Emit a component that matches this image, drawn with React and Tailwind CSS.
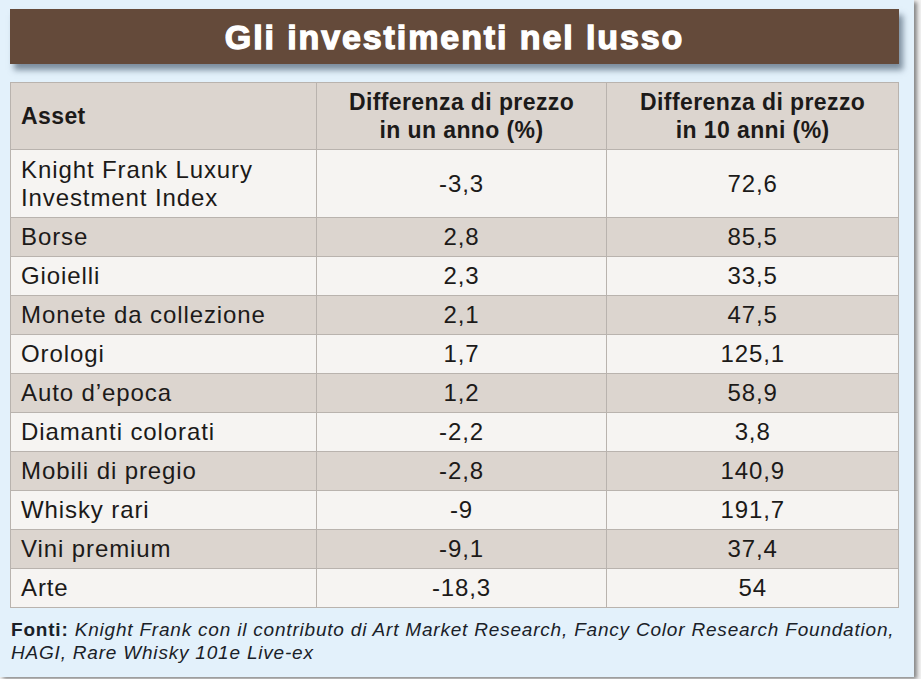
import React from 'react';

const rows = [
  { asset: 'Knight Frank Luxury\nInvestment Index', one: '-3,3', ten: '72,6' },
  { asset: 'Borse', one: '2,8', ten: '85,5' },
  { asset: 'Gioielli', one: '2,3', ten: '33,5' },
  { asset: 'Monete da collezione', one: '2,1', ten: '47,5' },
  { asset: 'Orologi', one: '1,7', ten: '125,1' },
  { asset: 'Auto d\u2019epoca', one: '1,2', ten: '58,9' },
  { asset: 'Diamanti colorati', one: '-2,2', ten: '3,8' },
  { asset: 'Mobili di pregio', one: '-2,8', ten: '140,9' },
  { asset: 'Whisky rari', one: '-9', ten: '191,7' },
  { asset: 'Vini premium', one: '-9,1', ten: '37,4' },
  { asset: 'Arte', one: '-18,3', ten: '54' },
];

const font = { fontFamily: '"Liberation Sans", Arial, sans-serif' };

export default function App() {
  return (
    <div className="w-[921px] h-[679px] bg-[#f2f2f2]" style={font}>
      <div className="w-[914px] h-[677px] bg-[#e3f1fb] shadow-[3px_2px_4px_rgba(0,0,0,0.45)] pt-[9px] px-[10px]">
        {/* Title */}
        <div className="w-[889px] h-[55px] bg-[#644a3a] flex items-center justify-center shadow-[4px_6px_6px_rgba(40,60,80,0.55)]">
          <h1 className="text-white text-[34px] font-bold tracking-[1.9px] leading-none [-webkit-text-stroke:1.3px_#fff]">
            Gli investimenti nel lusso
          </h1>
        </div>

        {/* Table */}
        <table className="mt-[18px] w-[889px] border-collapse text-[#1c1a19] text-[24px] tracking-[0.9px]">
          <colgroup>
            <col className="w-[306px]" />
            <col className="w-[291px]" />
            <col className="w-[292px]" />
          </colgroup>
          <thead>
            <tr className="bg-[#dcd5cf] h-[67px]">
              <th className="border border-[#b9b3ae] text-left font-bold text-[23px] tracking-[0.4px] px-[10px] leading-[28px]">
                Asset
              </th>
              <th className="border border-[#b9b3ae] text-center font-bold text-[23px] tracking-[0.4px] leading-[28px]">
                Differenza di prezzo<br />in un anno (%)
              </th>
              <th className="border border-[#b9b3ae] text-center font-bold text-[23px] tracking-[0.4px] leading-[28px]">
                Differenza di prezzo<br />in 10 anni (%)
              </th>
            </tr>
          </thead>
          <tbody>
            {rows.map((r, i) => (
              <tr
                key={r.asset}
                className={
                  (i % 2 === 0 ? 'bg-[#f6f4f2] ' : 'bg-[#dcd5cf] ') +
                  (i === 0 ? 'h-[68px]' : 'h-[39px]')
                }
              >
                <td className="border border-[#b9b3ae] px-[10px] leading-[28px] whitespace-pre-line">
                  {r.asset}
                </td>
                <td className="border border-[#b9b3ae] text-center leading-[28px]">{r.one}</td>
                <td className="border border-[#b9b3ae] text-center leading-[28px]">{r.ten}</td>
              </tr>
            ))}
          </tbody>
        </table>

        {/* Sources */}
        <p className="mt-[10px] pl-[1px] text-[19px] tracking-[0.8px] leading-[23px] text-[#1a2128] whitespace-nowrap">
          <span className="font-bold">Fonti:</span>{' '}
          <span className="italic">
            Knight Frank con il contributo di Art Market Research, Fancy Color Research Foundation,
          </span>
          <br />
          <span className="italic">HAGI, Rare Whisky 101e Live-ex</span>
        </p>
      </div>
    </div>
  );
}
